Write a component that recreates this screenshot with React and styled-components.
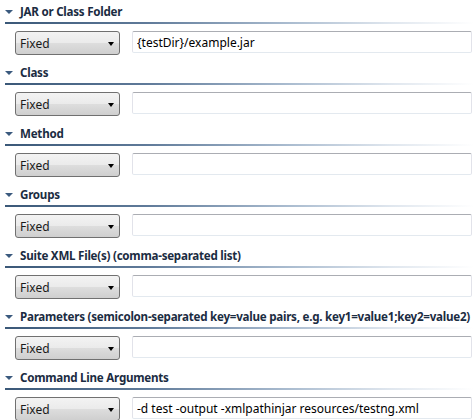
import * as React from 'react'
import styled, { createGlobalStyle } from 'styled-components'

const GlobalStyle = createGlobalStyle`
  html, body {
    margin: 0;
    padding: 0;
    background: #ffffff;
  }
  body {
    font-family: 'Noto Sans', 'DejaVu Sans', sans-serif;
    font-size: 12px;
    color: #000;
  }
`

const sections = [
  { title: 'JAR or Class Folder', value: '{testDir}/example.jar' },
  { title: 'Class', value: '' },
  { title: 'Method', value: '' },
  { title: 'Groups', value: '' },
  { title: 'Suite XML File(s) (comma-separated list)', value: '' },
  {
    title:
      'Parameters (semicolon-separated key=value pairs, e.g. key1=value1;key2=value2)',
    value: ''
  },
  {
    title: 'Command Line Arguments',
    value: '-d test -output -xmlpathinjar resources/testng.xml'
  }
]

const Page = styled.div`
  width: 474px;
  overflow: hidden;
`

const Section = styled.section`
  height: 61px;
  display: flex;
  flex-direction: column;
`

const Header = styled.div`
  height: 22px;
  display: flex;
  align-items: center;
  padding-left: 5px;
  white-space: nowrap;
`

const Twisty = styled.span`
  flex: none;
  width: 0;
  height: 0;
  border-left: 4px solid transparent;
  border-right: 4px solid transparent;
  border-top: 4px solid #3b5a7e;
  margin-right: 7px;
  margin-top: 1px;
`

const Title = styled.span`
  font-weight: bold;
  font-size: 11.6px;
  color: #1b2c42;
  letter-spacing: -0.25px;
`

const Rule = styled.div`
  height: 2px;
  margin-left: 5px;
  background: linear-gradient(
    to right,
    #3a5878 0%,
    #5f7a99 30%,
    #a9bbcf 60%,
    #dfe6ee 82%,
    rgba(255, 255, 255, 0) 100%
  );
`

const Row = styled.div`
  display: flex;
  align-items: flex-start;
  gap: 12px;
  margin-top: 7px;
  padding-left: 15px;
  padding-right: 2px;
`

const Combo = styled.div`
  box-sizing: border-box;
  width: 105px;
  height: 24px;
  flex: none;
  display: flex;
  align-items: center;
  justify-content: space-between;
  padding: 0 5px 0 4px;
  border: 1px solid #707070;
  border-radius: 3px;
  background: linear-gradient(
    to bottom,
    #f3f3f3 0%,
    #ebebeb 48%,
    #dddddd 52%,
    #cfcfcf 100%
  );
  color: #1a1a1a;
`

const Arrow = styled.span`
  width: 0;
  height: 0;
  border-left: 3.5px solid transparent;
  border-right: 3.5px solid transparent;
  border-top: 4px solid #000;
  margin-top: 1px;
`

const Field = styled.input`
  box-sizing: border-box;
  flex: 1;
  min-width: 0;
  height: 22px;
  padding: 0 4px;
  border: 1px solid #e2e3ea;
  border-top-color: #abadb3;
  border-bottom-color: #e3e9ef;
  border-radius: 2px;
  font-family: 'Noto Sans', 'DejaVu Sans', sans-serif;
  font-size: 12px;
  color: #000;
  background: #fff;
  outline: none;
`

export default function App() {
  return (
    <Page>
      <GlobalStyle />
      {sections.map((s) => (
        <Section key={s.title}>
          <Header>
            <Twisty />
            <Title>{s.title}</Title>
          </Header>
          <Rule />
          <Row>
            <Combo>
              <span>Fixed</span>
              <Arrow />
            </Combo>
            <Field type="text" defaultValue={s.value} readOnly />
          </Row>
        </Section>
      ))}
    </Page>
  )
}
